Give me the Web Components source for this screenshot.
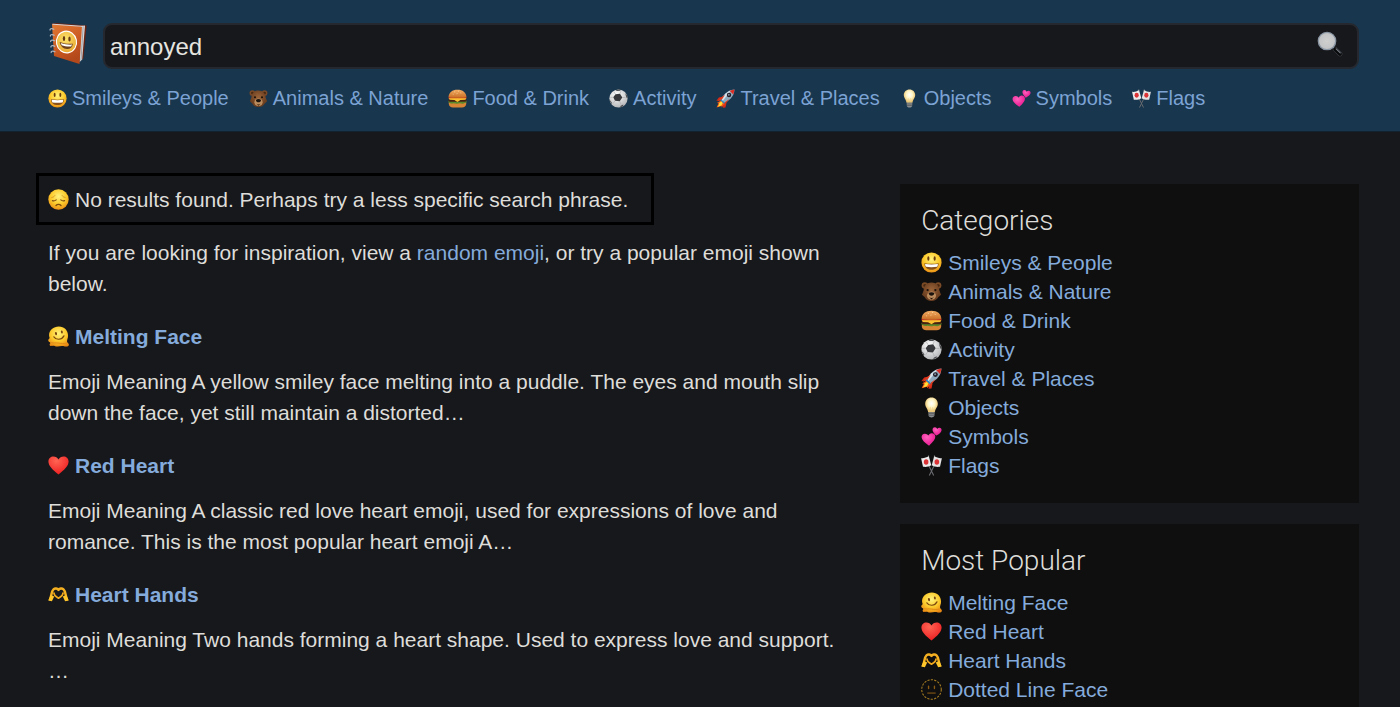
<!DOCTYPE html>
<html lang="en">
<head>
<meta charset="utf-8">
<meta name="viewport" content="width=device-width, initial-scale=1">
<title>annoyed – emoji search</title>
<style>
  html { background: #17181c; }
  body {
    margin: 0;
    font-family: "Liberation Sans", Arial, Helvetica, sans-serif;
    font-size: 21px;
    line-height: 31px;
    color: #deddd9;
    --link: #84abdb;
    --gutter-left: 48px;
    --gutter-right: 41px;
  }
</style>
</head>
<body>
<emoji-app></emoji-app>
<script>
const ball = (id) => `<defs><radialGradient id="${id}" cx=".5" cy=".35" r=".68"><stop offset="0" stop-color="#fff27e"/><stop offset=".55" stop-color="#fccb2c"/><stop offset="1" stop-color="#ea8a14"/></radialGradient></defs>`;
const heart = (fill) => `<path fill="${fill}" d="M10 18.6C4.300 14 .4 10.300 .4 6.200 .4 3.300 2.500 1.400 5.200 1.400c2 0 3.800 1.100 4.800 3 1-1.900 2.800-3 4.800-3 2.700 0 4.800 1.900 4.800 4.800 0 4.100-3.900 7.800-9.600 12.400z"/>`;

const ICONS = {
  grin: ball('g') + `<circle cx="10" cy="10" r="9.600" fill="url(#g)"/>
    <ellipse cx="7" cy="6.200" rx="1" ry="2.200" fill="#6d3c0c"/><ellipse cx="13" cy="6.200" rx="1" ry="2.200" fill="#6d3c0c"/>
    <path d="M3.200 10.700c4.400.7 9.200.7 13.600 0 .1 3.800-2.600 6.200-6.800 6.200s-6.900-2.400-6.800-6.200z" fill="#8a5218"/>
    <path d="M3.900 11.400c4 .6 8.200.6 12.200 0 0 .9-.2 1.900-.7 2.700-3.600.6-7.200.6-10.800 0-.5-.8-.7-1.800-.7-2.700z" fill="#fff"/>`,
  bear: `<defs><radialGradient id="b" cy=".4"><stop offset="0" stop-color="#9a6439"/><stop offset="1" stop-color="#6a3e20"/></radialGradient></defs>
    <circle cx="3.600" cy="4.200" r="3" fill="#7b4a27"/><circle cx="16.400" cy="4.200" r="3" fill="#7b4a27"/><circle cx="3.700" cy="4.300" r="1.500" fill="#46270f"/><circle cx="16.300" cy="4.300" r="1.500" fill="#46270f"/>
    <path d="M10 1.500c4.500 0 7.300 3 7.500 7.500l1.600 4-2.500 2.200c-1.300 2.400-3.700 3.800-6.600 3.800s-5.300-1.400-6.600-3.800L.9 13l1.600-4C2.700 4.500 5.500 1.500 10 1.500z" fill="url(#b)"/>
    <ellipse cx="10" cy="14" rx="4.300" ry="3.900" fill="#bb8c5d"/><circle cx="6.300" cy="8.600" r="1.100" fill="#1d120b"/><circle cx="13.700" cy="8.600" r="1.100" fill="#1d120b"/>
    <path d="M7.300 11.500c1.500-1.200 3.900-1.200 5.400 0 0 1.500-1.300 2.500-2.700 2.500s-2.700-1-2.700-2.500z" fill="#19120e"/><path d="M7.600 15.300c1.500 1.200 3.300 1.200 4.800 0L10 17.600z" fill="#2c1309"/>`,
  burger: `<defs><linearGradient id="u" x2="0" y2="1"><stop offset="0" stop-color="#f3ae64"/><stop offset="1" stop-color="#c96d25"/></linearGradient></defs>
    <path d="M.8 14h18.400v1.500c0 2.600-2 3.900-4.400 3.900H5.200c-2.400 0-4.400-1.300-4.400-3.900z" fill="#d78534"/>
    <path d="M.5 12.300c3-1 16-1 19 0 .2 1.300 0 2-1.500 2.300-2.500 1.500-4 .6-5.500.4-3 .8-4.500.5-6.500 0-1.700.6-3 .4-4.500-.6-.9-.4-1.200-1-1-2.100z" fill="#58892a"/>
    <rect x=".6" y="10.300" width="18.800" height="3.200" rx="1.600" fill="#4a2212"/>
    <path d="M.6 9.500h18.800l-1 1.900-5.400.2-3 2-3.300-2-5-.2z" fill="#fbc02f"/><path d="M.5 8.300h19v1.400H.5z" fill="#c13222"/>
    <path d="M.6 8.300C.9 3.500 4.400.7 10 .7s9.100 2.800 9.400 7.600c-2.900 1.300-15.900 1.300-18.800 0z" fill="url(#u)"/>
    <path d="M6.500 3l1 .3M10.500 2.300l1 .1M13 4l.9.300M9 5l1-.2M5 5.500l.8.200" stroke="#ffe2af" stroke-width=".7"/>`,
  soccer: `<defs><radialGradient id="s" cx=".4" cy=".3" r=".75"><stop offset="0" stop-color="#fff"/><stop offset="1" stop-color="#b2b3b5"/></radialGradient></defs>
    <circle cx="10" cy="10" r="9.600" fill="url(#s)"/>
    <path d="M6.800 5.600l4.800-.6 2.400 3.900-2.700 4-5-.5L4.500 8.700z" fill="#36383b"/>
    <path d="M7 1c1.600-.6 4-.7 5.800-.2l-1.200 1-3.400.2zM17.600 4.400l1.500 2.700.4 3-1.200-1.200-.9-3.200zM14.800 18.200l-3.300 1.200.9-1.700 2.600-1.300zM2.200 15.200L.6 11.700l1.300.9 1.500 2.700z" fill="#4a4c4f"/>
    <path d="M6.800 5.600L5.200 3M11.600 5l1-2.800M14 8.900l3.300.1M11.300 12.900l1.400 3.300M6.300 12.400l-1.900 2.700M4.500 8.700l-3 .3" stroke="#a5a7aa" stroke-width=".6"/>`,
  rocket: `<path d="M5.500 11.200L.3 12.500 3 9l5-1.200zM11 14.700l-1 4.900-2.900 .2 .9-4z" fill="#d72b18"/>
    <path d="M5.800 11.700L1 14.700l1.700.3L.6 19.400l5.200-1.500.2 1.500 3.500-4.500z" fill="#fb5914"/><path d="M5.600 13L2.700 15.300l1 .3-2 3 4-1.200 1.400-2.700z" fill="#ffdf37"/>
    <path d="M19.500.5C13.500.8 9 4 5.200 11.300l3.500 3.500C16 11 19.200 6.500 19.500.5z" fill="#8fa9bd"/>
    <path d="M16 1.300C11.600 3 8 6.300 5.200 11.300l1.600 1.600z" fill="#d6e4ed"/><path d="M19.500.5l-5.200 1.300 3.900 3.900z" fill="#df2c22"/>
    <path d="M9.500 6L4.700 9.500 1.400 13 6 11.700zM14 10.500l-3.600 4.800-2.600 3.300.9-4.100z" fill="#e03a1c"/>
    <circle cx="13.700" cy="6.300" r="2.300" fill="#241d27"/><circle cx="13.500" cy="6" r="1" fill="#7f8fa0"/><path d="M5.500 10.700l3.800 3.800-1 .9-3.600-3.600z" fill="#248ccc"/>`,
  bulb: `<defs><radialGradient id="l" cx=".5" cy=".4"><stop offset="0" stop-color="#fff"/><stop offset=".55" stop-color="#fff5c5"/><stop offset="1" stop-color="#ecc979"/></radialGradient></defs>
    <path d="M10 .4c3.500 0 6 2.500 6 6 0 3.200-2.300 4.400-2.900 8.200H6.900C6.300 10.800 4 9.600 4 6.400c0-3.500 2.500-6 6-6z" fill="url(#l)"/>
    <path d="M9 14V9.500M11 14V9.500" fill="none" stroke="#f0cf85" stroke-width=".5"/>
    <path d="M7 14.600h6l-.3 3.600c-.8 1.700-4.600 1.700-5.400 0z" fill="#8c8f91"/><path d="M7 15.800h6M7.200 17.400h5.600" stroke="#4e5153" stroke-width=".7"/>`,
  hearts: `<defs><radialGradient id="p" cx=".4" cy=".3"><stop offset="0" stop-color="#ff62bd"/><stop offset="1" stop-color="#ee2a9c"/></radialGradient></defs>
    <g transform="translate(0 6.600) rotate(-4) scale(.68)">${heart('url(#p)')}</g><g transform="translate(11.200 .2) rotate(8) scale(.45)">${heart('url(#p)')}</g>`,
  flags: `<path d="M4.500 4l7.600 15.500M15.500 4L7.900 19.500" stroke="#6a6c70" stroke-width="1"/>
    <path d="M.1 3C2.600 3.300 5 2.600 7.400 1l2.400 8.800c-2.400 1.500-5 1.900-7.900 1.500z" fill="#eceaea"/><path d="M19.900 3c-2.500.3-4.900-.4-7.300-2l-2.400 8.800c2.400 1.500 5 1.900 7.900 1.500z" fill="#e3e1e1"/>
    <ellipse cx="4.900" cy="6.600" rx="2.200" ry="2.600" fill="#dc3336"/><ellipse cx="15.100" cy="6.600" rx="2.200" ry="2.600" fill="#dc3336"/>
    <circle cx="7.200" cy="1" r=".6" fill="#aaa"/><circle cx="12.800" cy="1" r=".6" fill="#aaa"/>`,
  sad: ball('d') + `<circle cx="10" cy="10" r="9.700" fill="url(#d)"/>
    <path d="M3.300 8.100c1.500-.2 2.700-.9 3.400-2.100M16.700 8.100c-1.500-.2-2.700-.9-3.400-2.100" fill="none" stroke="#d08d1e" stroke-width=".8"/>
    <path d="M4.200 11.100c1.300.5 2.500.2 3.600-.7M15.800 11.100c-1.300.5-2.500.2-3.600-.7" fill="none" stroke="#7d4a10" stroke-width="1.100" stroke-linecap="round"/>
    <path d="M7.600 15.700c1.300-1.400 3.500-1.400 4.800 0" fill="none" stroke="#7d4a10" stroke-width="1.200" stroke-linecap="round"/>`,
  melting: ball('m') + `<path d="M10.300.4c5.200 0 8.800 3.700 8.800 8.600 0 2.700-1 4-1 5.600 0 1.500 1.800 1.900 1.800 3.300 0 1.300-1.400 1.900-3 1.700-1.500-.2-2.300-.7-3.700-.5-1.700.2-3.500.8-5.600.4-1.100-.2-1.500-.7-2.700-.6-1.500.1-3.300.1-3.400-1-.1-.9.9-1.100.7-1.900-.2-.6-2-.9-2-2.200 0-1.400 1.400-1.200 1.300-2.500C1.400 10.600 1 9.900 1 8.600 1 3.800 5.200.4 10.300.4z" fill="url(#m)"/>
    <path d="M3 15.800c2.600.8 4.200 0 6.700.4 2.700.5 4.900.7 8.100 0" fill="none" stroke="#de8415" stroke-width=".8"/>
    <ellipse cx="7.600" cy="7.200" rx="1" ry="1.600" fill="#7a470f" transform="rotate(-12 7.600 7.200)"/><ellipse cx="13.200" cy="5.700" rx=".9" ry="1.500" fill="#7a470f" transform="rotate(-12 13.200 5.700)"/>
    <path d="M5.600 10.300c2.200 3.200 7.400 3.200 9.600-.9" fill="none" stroke="#7a470f" stroke-width="1.100" stroke-linecap="round"/>`,
  heart: `<defs><radialGradient id="h" cx=".4" cy=".25" r=".75"><stop offset="0" stop-color="#ff6453"/><stop offset="1" stop-color="#ee2022"/></radialGradient></defs>${heart('url(#h)')}`,
  hands: `<g fill="none" stroke-linejoin="round" stroke-linecap="round"><path d="M1.900 14.700C3.400 11.500 3 7 5.200 5.100c1.600-1.400 3.600-.9 4.800.5 1.200-1.400 3.200-1.900 4.800-.5 2.200 1.900 1.800 6.400 3.300 9.600" stroke="#f5b021" stroke-width="2.300"/><path d="M5.700 8.600c.1 2.600 2.400 3.900 4.300 4.900 1.900-1 4.200-2.300 4.300-4.900" stroke="#f2a81c" stroke-width="1.700"/></g>
    <path d="M.2 15.600l3.500.8L5.900 12l-3.300-1.600zM19.800 15.600l-3.500.8-2.200-4.400 3.300-1.600z" fill="#ffc62c"/>`,
  dotted: `<g fill="none" stroke="#8a5a14"><circle cx="10" cy="10" r="9.300" stroke-dasharray="2.100 1.200" stroke="#a87e22"/><path d="M6 13.400h8" stroke-width="1"/><path d="M7.200 6.900v2.200M12.800 6.900v2.200" stroke-width="1.300" stroke-linecap="round"/></g>`,
  magnifier: `<defs><radialGradient id="z"><stop offset="0" stop-color="#cfcfcf"/><stop offset="1" stop-color="#c0c2c4"/></radialGradient></defs>
    <path d="M12 12l2 2" stroke="#9298a1" stroke-width="1.500"/><path d="M14 14l3.700 3.700" stroke="#3c4046" stroke-width="3.600" stroke-linecap="round"/><path d="M14 14l3.700 3.700" stroke="#08090b" stroke-width="2.800" stroke-linecap="round"/><path d="M14.700 13.700l3.200 3.200" stroke="#7c828a" stroke-width=".8" stroke-linecap="round"/>
    <circle cx="7.700" cy="7.700" r="6.700" fill="url(#z)" stroke="#8a96a4" stroke-width="1"/>`,
};

/* One emoji drawing; its size follows --icon-size. */
class EmojiIcon extends HTMLElement {
  connectedCallback() {
    if (this.shadowRoot) return;
    this.attachShadow({ mode: 'open' }).innerHTML = `
      <style>
        :host { display: block; flex: none; width: var(--icon-size, 21px); height: var(--icon-size, 21px); }
        svg { display: block; width: 100%; height: 100%; }
      </style>
      <svg viewBox="0 0 20 20" aria-hidden="true">${ICONS[this.getAttribute('name')]}</svg>`;
  }
}

/* Book logo that leads back to the home page. */
class SiteLogo extends HTMLElement {
  constructor() {
    super();
    this.attachShadow({ mode: 'open' }).innerHTML = `
      <style>
        :host { display: block; flex: none; align-self: flex-start; }
        a, svg { display: block; width: 40px; height: 42px; }
      </style>
      <a href="#" aria-label="Home"><svg viewBox="0 0 40 42">
        <defs>
          <linearGradient id="c" x2=".4" y2="1"><stop offset="0" stop-color="#e07a35"/><stop offset=".6" stop-color="#cb5a22"/><stop offset="1" stop-color="#b3481a"/></linearGradient>
          <radialGradient id="f" cx=".5" cy=".35" r=".7"><stop offset="0" stop-color="#fde56c"/><stop offset="1" stop-color="#e8a52f"/></radialGradient>
        </defs>
        <path d="M3.500.8L8 0l30.600 2.600-3.200 33L32 38z" fill="#6b2412"/>
        <path d="M33 3l4-.6-2.800 33.800-2.700 3z" fill="#d9dade"/><path d="M35.200 3L33 37.500" stroke="#85868c" stroke-width=".7"/>
        <path d="M4 1l30 2.500L31.500 41 6 33z" fill="url(#c)"/>
        <path d="M4.500 1.200l31 2.200" stroke="#d9d5d6" stroke-width="1"/>
        <path d="M6.300 6.500c-3-1.700-5-.5-4 1M6.600 12.500c-3-1.700-5-.5-4 1M6.900 18c-3-1.700-5-.5-4 1M7.200 23.500c-3-1.700-5-.5-4 1M7.400 29c-3-1.700-5-.5-4 1" fill="none" stroke="#aeb7c2" stroke-width="1.200"/>
        <ellipse cx="18.500" cy="19" rx="10.600" ry="11.400" fill="#fff" transform="rotate(-12 18.500 19)"/>
        <ellipse cx="18.500" cy="19" rx="9.500" ry="10.300" fill="url(#f)" transform="rotate(-12 18.500 19)"/>
        <ellipse cx="16" cy="15.600" rx="1.200" ry="2.500" fill="#683a12"/><ellipse cx="21.500" cy="16" rx="1.200" ry="2.500" fill="#683a12"/>
        <path d="M11.700 19c4.200 1.600 8.700 2.100 13.200 1.700-.4 3.400-2.600 5.400-5.900 5.300-3.800-.1-6.800-3.200-7.300-7z" fill="#70421a"/>
        <path d="M12.700 20c3.900 1.300 7.600 1.800 11.400 1.600l-1 1.900c-3.300.3-6.600-.1-9.400-1.300z" fill="#fff"/>
      </svg></a>`;
  }
}

class SearchBox extends HTMLElement {
  connectedCallback() {
    if (this.shadowRoot) return;
    this.attachShadow({ mode: 'open' }).innerHTML = `
      <style>
        :host { display: block; flex: 1; min-width: 0; }
        form { display: flex; align-items: center; margin: 0; height: 46px; box-sizing: border-box; background: #17181c; border: 2px solid #25292f; border-radius: 9px; }
        input { flex: 1; min-width: 0; height: 42px; box-sizing: border-box; margin: 0; padding: 1px 5px 0; border: 0; outline: 0; background: none; color: #e6e5e0; font-family: inherit; font-size: 24px; }
        button { flex: none; margin: 0; padding: 0 14px 4px 0; border: 0; background: none; --icon-size: 26px; cursor: pointer; }
      </style>
      <form role="search" onsubmit="return false">
        <input type="text" aria-label="Search emojis" value="${this.getAttribute('value')}">
        <button type="submit" aria-label="Search"><emoji-icon name="magnifier"></emoji-icon></button>
      </form>`;
  }
}

/* A link with its emoji in front. */
class EmojiLink extends HTMLElement {
  connectedCallback() {
    if (this.shadowRoot) return;
    this.attachShadow({ mode: 'open' }).innerHTML = `
      <style>
        :host { display: block; }
        a { display: flex; width: fit-content; align-items: center; gap: var(--icon-gap, 6px); color: var(--link); text-decoration: none; white-space: nowrap; }
        a:hover { text-decoration: underline; }
      </style>
      <a href="#"><emoji-icon name="${this.getAttribute('icon')}"></emoji-icon><slot></slot></a>`;
  }
}

class SiteHeader extends HTMLElement {
  constructor() {
    super();
    this.attachShadow({ mode: 'open' }).innerHTML = `
      <style>
        :host { display: block; background: #18364e; border-bottom: 1px solid #14222f; padding: 23px var(--gutter-right) 18px var(--gutter-left); }
        .bar { display: flex; align-items: center; gap: 15px; }
        nav { display: flex; flex-wrap: wrap; column-gap: 20px; margin-top: 15px; font-size: 20px; line-height: 29px; --icon-size: 19px; --icon-gap: 5px; --link: #7ca3d4; }
      </style>
      <div class="bar"><site-logo></site-logo><slot name="search"></slot></div>
      <nav aria-label="Categories"><slot></slot></nav>`;
  }
}

class SearchNotice extends HTMLElement {
  constructor() {
    super();
    this.attachShadow({ mode: 'open' }).innerHTML = `
      <style>
        :host { display: block; }
        p { display: flex; align-items: center; gap: 6px; width: fit-content; margin: 0 0 12px -12px; padding: 8px 23px 7px 9px; border: 3px solid #000; }
      </style>
      <p role="status"><emoji-icon name="sad"></emoji-icon><span><slot></slot></span></p>`;
  }
}

class EmojiResult extends HTMLElement {
  connectedCallback() {
    if (this.shadowRoot) return;
    this.attachShadow({ mode: 'open' }).innerHTML = `
      <style>
        :host { display: block; margin-top: 22px; }
        h2 { margin: 0 0 14px; font-size: 21px; font-weight: bold; }
        p { margin: 0; }
      </style>
      <h2><emoji-link icon="${this.getAttribute('icon')}">${this.getAttribute('name')}</emoji-link></h2>
      <p><slot></slot></p>`;
  }
}

class SideCard extends HTMLElement {
  connectedCallback() {
    if (this.shadowRoot) return;
    this.attachShadow({ mode: 'open' }).innerHTML = `
      <style>
        :host { display: block; background: #0f0f0f; padding: 21px 21px 23px; line-height: 29px; }
        h2 { margin: 0 0 11px; font-family: Roboto, "Liberation Sans", sans-serif; font-weight: 300; font-size: 28px; line-height: 32px; }
      </style>
      <h2>${this.getAttribute('heading')}</h2>
      <slot></slot>`;
  }
}

class EmojiApp extends HTMLElement {
  constructor() {
    super();
    const categories = [
      ['grin', 'Smileys &amp; People'], ['bear', 'Animals &amp; Nature'], ['burger', 'Food &amp; Drink'], ['soccer', 'Activity'],
      ['rocket', 'Travel &amp; Places'], ['bulb', 'Objects'], ['hearts', 'Symbols'], ['flags', 'Flags'],
    ];
    const popular = [['melting', 'Melting Face'], ['heart', 'Red Heart'], ['hands', 'Heart Hands'], ['dotted', 'Dotted Line Face']];
    const links = (items) => items.map(([icon, label]) => `<emoji-link icon="${icon}">${label}</emoji-link>`).join('');
    this.attachShadow({ mode: 'open' }).innerHTML = `
      <style>
        :host { display: block; }
        .page { display: grid; grid-template-columns: minmax(0, 1fr) 35%; column-gap: 55px; align-items: start; padding: 41px var(--gutter-right) 0 var(--gutter-left); }
        aside { display: grid; gap: 21px; padding-top: 11px; }
        p { margin: 0; }
        a { color: var(--link); text-decoration: none; }
        a:hover { text-decoration: underline; }
      </style>
      <site-header>
        <search-box slot="search" value="annoyed"></search-box>
        ${links(categories)}
      </site-header>
      <div class="page">
        <main>
          <search-notice>No results found. Perhaps try a less specific search phrase.</search-notice>
          <p>If you are looking for inspiration, view a <a href="#">random emoji</a>, or try a popular emoji shown below.</p>
          <emoji-result icon="melting" name="Melting Face">Emoji Meaning A yellow smiley face melting into a puddle. The eyes and mouth slip down the face, yet still maintain a distorted…</emoji-result>
          <emoji-result icon="heart" name="Red Heart">Emoji Meaning A classic red love heart emoji, used for expressions of love and romance. This is the most popular heart emoji A…</emoji-result>
          <emoji-result icon="hands" name="Heart Hands">Emoji Meaning Two hands forming a heart shape. Used to express love and support. …</emoji-result>
        </main>
        <aside>
          <side-card heading="Categories">${links(categories)}</side-card>
          <side-card heading="Most Popular">${links(popular)}</side-card>
        </aside>
      </div>`;
  }
}

customElements.define('emoji-icon', EmojiIcon);
customElements.define('site-logo', SiteLogo);
customElements.define('search-box', SearchBox);
customElements.define('emoji-link', EmojiLink);
customElements.define('site-header', SiteHeader);
customElements.define('search-notice', SearchNotice);
customElements.define('emoji-result', EmojiResult);
customElements.define('side-card', SideCard);
customElements.define('emoji-app', EmojiApp);
</script>
</body>
</html>
